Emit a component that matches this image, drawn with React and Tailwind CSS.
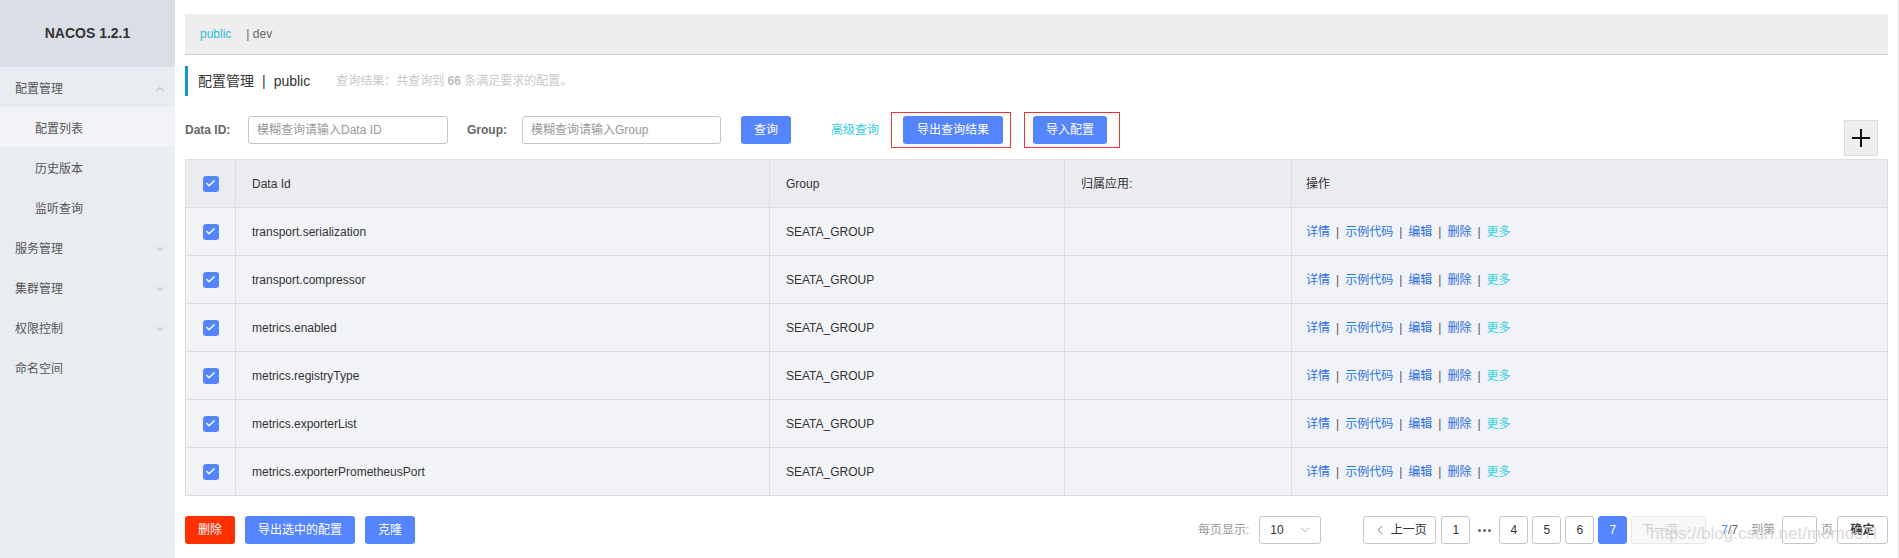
import React from "react";
import { ChevronUp, ChevronDown, ChevronLeft, ChevronRight, Check } from "lucide-react";

const rows = [
  "transport.serialization",
  "transport.compressor",
  "metrics.enabled",
  "metrics.registryType",
  "metrics.exporterList",
  "metrics.exporterPrometheusPort",
];

function Box() {
  return (
    <span className="inline-flex h-[16px] w-[16px] items-center justify-center rounded-[3px] bg-[#5584ff]">
      <Check size={11} strokeWidth={3} color="#fff" />
    </span>
  );
}

function Sidebar() {
  const menu = [
    { label: "配置管理", icon: "up" },
    { label: "配置列表", sub: true, active: true },
    { label: "历史版本", sub: true },
    { label: "监听查询", sub: true },
    { label: "服务管理", icon: "down" },
    { label: "集群管理", icon: "down" },
    { label: "权限控制", icon: "down" },
    { label: "命名空间" },
  ];
  return (
    <div className="w-[175px] shrink-0 bg-[#e9ecf1]">
      <div className="flex h-[67px] items-center justify-center bg-[#dadee6] text-[14px] font-bold text-[#333]">
        NACOS 1.2.1
      </div>
      {menu.map((m) => (
        <div
          key={m.label}
          className={`flex h-[40px] items-center justify-between pr-[9px] pt-[3px] text-[12px] text-[#555] ${
            m.sub ? "pl-[35px]" : "pl-[15px]"
          } ${m.active ? "bg-[#f2f3f7]" : ""}`}
        >
          <span>{m.label}</span>
          {m.icon === "up" && <ChevronUp size={12} strokeWidth={1.5} color="#999" />}
          {m.icon === "down" && <ChevronDown size={12} strokeWidth={1.5} color="#999" />}
        </div>
      ))}
    </div>
  );
}

function Ops() {
  return (
    <span className="text-[12px]">
      <span className="text-[#2a6fdf]">详情</span>
      <span className="mx-[6px] text-[#555]">|</span>
      <span className="text-[#2a6fdf]">示例代码</span>
      <span className="mx-[6px] text-[#555]">|</span>
      <span className="text-[#2a6fdf]">编辑</span>
      <span className="mx-[6px] text-[#555]">|</span>
      <span className="text-[#2a6fdf]">删除</span>
      <span className="mx-[6px] text-[#555]">|</span>
      <span className="text-[#33cde5]">更多</span>
    </span>
  );
}

function PageBtn({ children, active, disabled, className = "" }) {
  return (
    <div
      className={`flex h-[28px] items-center justify-center rounded-[3px] border text-[12px] ${
        active
          ? "border-[#5584ff] bg-[#5584ff] text-white"
          : disabled
          ? "border-[#e6e7eb] bg-[#f7f8fa] text-[#ccc]"
          : "border-[#c4c6cf] bg-white text-[#333]"
      } ${className}`}
    >
      {children}
    </div>
  );
}

export default function App() {
  return (
    <div className="relative flex h-[558px] w-full overflow-hidden bg-white font-['Liberation_Sans','Noto_Sans_CJK_SC',sans-serif] text-[#333]">
      <Sidebar />
      <div className="flex-1 border-r border-[#e3e3e3] pl-[10px] pr-[10px]">
        {/* namespace bar */}
        <div className="mt-[14px] flex h-[41px] items-center border-b border-[#ccc] bg-[#eeeeee] pl-[15px] text-[12px]">
          <span className="text-[#2ebadb]">public</span>
          <span className="ml-[15px] text-[#666]">| dev</span>
        </div>

        {/* title */}
        <div className="mt-[11px] flex h-[30px] items-center border-l-[3px] border-[#0f9ad6] pl-[10px]">
          <span className="text-[14px] text-[#333]">配置管理</span>
          <span className="mx-[8px] text-[14px] text-[#333]">|</span>
          <span className="text-[14px] text-[#333]">public</span>
          <span className="ml-[26px] text-[12px] text-[#c8c8c8]">
            查询结果：共查询到 <b className="text-[#bbb]">66</b> 条满足要求的配置。
          </span>
        </div>

        {/* search row */}
        <div className="mt-[16px] flex h-[44px] items-start">
          <div className="mt-[4px] flex h-[28px] items-center">
            <span className="w-[63px] text-[12px] font-bold text-[#666]">Data ID:</span>
            <div className="flex h-[28px] w-[200px] items-center rounded-[3px] border border-[#c4c6cf] px-[8px] text-[12px] text-[#999]">
              模糊查询请输入Data ID
            </div>
            <span className="ml-[19px] w-[55px] text-[12px] font-bold text-[#666]">Group:</span>
            <div className="flex h-[28px] w-[199px] items-center rounded-[3px] border border-[#c4c6cf] px-[8px] text-[12px] text-[#999]">
              模糊查询请输入Group
            </div>
            <div className="ml-[20px] flex h-[28px] w-[50px] items-center justify-center rounded-[3px] bg-[#5584ff] text-[12px] text-white">
              查询
            </div>
            <span className="ml-[40px] text-[12px] text-[#33cde5]">高级查询</span>
          </div>
          <div className="ml-[12px] flex h-[36px] items-center border border-[#e33] pl-[11px] pr-[7px]">
            <div className="flex h-[28px] w-[100px] items-center justify-center rounded-[3px] bg-[#5584ff] text-[12px] text-white">
              导出查询结果
            </div>
          </div>
          <div className="ml-[13px] flex h-[36px] items-center border border-[#e33] pl-[8px] pr-[12px]">
            <div className="flex h-[28px] w-[74px] items-center justify-center rounded-[3px] bg-[#5584ff] text-[12px] text-white">
              导入配置
            </div>
          </div>
          <div className="ml-auto mr-[10px] mt-[8px] flex h-[36px] w-[34px] items-center justify-center border border-[#ddd] bg-[#eeeeee]">
            <svg width="20" height="20" viewBox="0 0 20 20">
              <path d="M10 1v18M1 10h18" stroke="#111" strokeWidth="2" />
            </svg>
          </div>
        </div>

        {/* table */}
        <table className="mt-[3px] w-full table-fixed border-collapse border border-[#dcdee3] text-[12px]">
          <colgroup>
            <col className="w-[50px]" />
            <col className="w-[534px]" />
            <col className="w-[295px]" />
            <col className="w-[227px]" />
            <col />
          </colgroup>
          <thead>
            <tr className="h-[48px] bg-[#ebecf0] text-left">
              <th className="border border-[#dcdee3] text-center font-normal">
                <div className="flex justify-center"><Box /></div>
              </th>
              <th className="border border-[#dcdee3] pl-[16px] font-normal">Data Id</th>
              <th className="border border-[#dcdee3] pl-[16px] font-normal">Group</th>
              <th className="border border-[#dcdee3] pl-[16px] font-normal">归属应用:</th>
              <th className="border border-[#dcdee3] pl-[14px] font-normal">操作</th>
            </tr>
          </thead>
          <tbody>
            {rows.map((r) => (
              <tr key={r} className="h-[48px] bg-[#f2f3f7]">
                <td className="border border-[#dcdee3]">
                  <div className="flex justify-center"><Box /></div>
                </td>
                <td className="border border-[#dcdee3] pl-[16px]">{r}</td>
                <td className="border border-[#dcdee3] pl-[16px]">SEATA_GROUP</td>
                <td className="border border-[#dcdee3]"></td>
                <td className="border border-[#dcdee3] pl-[14px]"><Ops /></td>
              </tr>
            ))}
          </tbody>
        </table>

        {/* footer */}
        <div className="mt-[20px] flex h-[28px] items-center text-[12px]">
          <div className="flex h-[28px] w-[50px] items-center justify-center rounded-[3px] bg-[#ff3000] text-white">
            删除
          </div>
          <div className="ml-[10px] flex h-[28px] w-[110px] items-center justify-center rounded-[3px] bg-[#5584ff] text-white">
            导出选中的配置
          </div>
          <div className="ml-[10px] flex h-[28px] w-[50px] items-center justify-center rounded-[3px] bg-[#5584ff] text-white">
            克隆
          </div>

          <div className="ml-auto flex items-center">
            <span className="text-[#999]">每页显示:</span>
            <div className="ml-[10px] flex h-[28px] w-[62px] items-center justify-between rounded-[3px] border border-[#c4c6cf] pl-[10px] pr-[8px] text-[#333]">
              <span>10</span>
              <ChevronDown size={14} strokeWidth={1.2} color="#888" />
            </div>
            <PageBtn className="ml-[42px] w-[73px] gap-[4px]">
              <ChevronLeft size={14} strokeWidth={1.2} />
              上一页
            </PageBtn>
            <PageBtn className="ml-[5px] w-[29px]">1</PageBtn>
            <span className="mx-[8px] flex items-center gap-[2px]">
              <span className="h-[3px] w-[3px] rounded-full bg-[#666]"></span>
              <span className="h-[3px] w-[3px] rounded-full bg-[#666]"></span>
              <span className="h-[3px] w-[3px] rounded-full bg-[#666]"></span>
            </span>
            <PageBtn className="w-[29px]">4</PageBtn>
            <PageBtn className="ml-[4px] w-[29px]">5</PageBtn>
            <PageBtn className="ml-[4px] w-[29px]">6</PageBtn>
            <PageBtn active className="ml-[4px] w-[29px]">7</PageBtn>
            <PageBtn disabled className="ml-[4px] w-[75px] gap-[4px]">
              下一页
              <ChevronRight size={14} strokeWidth={1.2} />
            </PageBtn>
            <span className="ml-[15px]">
              <span className="text-[#5584ff]">7</span>
              <span className="text-[#666]">/7</span>
            </span>
            <span className="ml-[13px] text-[#999]">到第</span>
            <div className="ml-[7px] h-[28px] w-[35px] rounded-[3px] border border-[#c4c6cf] bg-white"></div>
            <span className="ml-[4px] text-[#999]">页</span>
            <PageBtn className="ml-[4px] w-[51px] font-bold">确定</PageBtn>
          </div>
        </div>
      </div>

      <div className="pointer-events-none absolute left-[1650px] top-[521px] text-[17px] text-[#cfcfcf]/80">
        https://blog.csdn.net/momo57l
      </div>
    </div>
  );
}
